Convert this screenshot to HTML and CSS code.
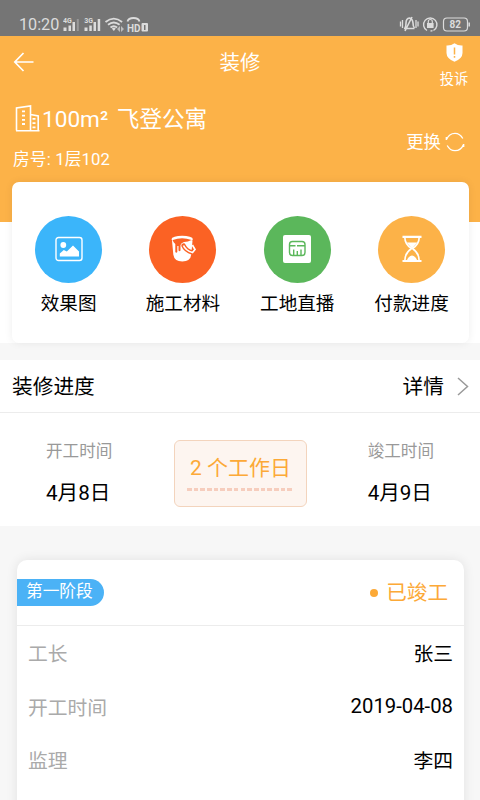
FILE: index.html
```html
<!DOCTYPE html>
<html lang="zh-CN">
<head>
<meta charset="utf-8">
<title>装修</title>
<link rel="stylesheet" href="styles.css">
</head>
<body>
<div class="status">
  <span class="clock">10:20</span>
  <svg class="signals" width="88" height="18" viewBox="0 0 88 18" fill="#dcdcdc">
    <text class="net" x="0" y="7">4G</text>
    <path d="M0.500 11.500H3.500v3.500H.500zM5.500 9.500H8v5.500H5.500zM9.500 6H12v9H9.500z"/><path d="M13.800 3h2v12h-2z" opacity=".35"/>
    <text class="net" x="21.200" y="7">3G</text>
    <path d="M21.500 11.500h3v3.500h-3zM26.300 9.500h2.500v5.500h-2.500zM30.500 6H33v9h-2.500zM34.700 3h2.500v12h-2.500z"/>
    <g fill="none" stroke="#dcdcdc" stroke-width="1.800"><path d="M42.500 6q8.300-6.800 16.600 0M45 8.800q5.800-4.600 11.600 0M47.500 11.500q3.300-2.600 6.600 0"/><path d="M64.500 5.500q1-3.500 6-3.500t6 3.500"/></g>
    <path d="M48.800 12.500q2-1.400 4 0l-2 2.500z"/><path d="M54 13l3-3v6zM58 10l3 3-3 3z" opacity=".7"/>
    <text class="hd" x="64" y="15.500" textLength="13.500" lengthAdjust="spacingAndGlyphs">HD</text>
    <rect x="78.500" y="7" width="6.500" height="8.500" rx="1"/><path d="M81 9h1.500v5H81z" fill="#757575"/>
  </svg>
  <svg class="phone-state" width="72" height="18" viewBox="0 0 72 18" fill="none" stroke="#dcdcdc">
    <path d="M1.500 6.500v5M3.500 5v8M17 5v8M19 6.500v5" stroke-width="1.300"/>
    <path d="M5 13.500h10.500M6 13q1-1.500 1-5 0-4.500 3.500-5 3 .5 3.500 5 0 3.500 1.500 5M6 16l7-14" stroke-width="1.600"/>
    <path d="M28 15.500a6.700 6.700 0 1 1 6.500 0M33.500 15.600l-2 .6" stroke-width="1.400"/>
    <rect x="28" y="8" width="6.600" height="5" fill="#dcdcdc" stroke="none"/><path d="M29.300 8V6.500a2 2 0 0 1 4 0V8" stroke-width="1.200"/>
    <rect x="44.500" y="3" width="24" height="13" rx="3.500" stroke-width="1.200"/><path d="M70.200 7.500v4" stroke-width="1.500"/>
    <text class="battery" x="50.500" y="13.200">82</text>
  </svg>
</div>
<header class="hero">
  <div class="bar">
    <svg class="back" width="22" height="20" viewBox="0 0 22 20" fill="none" stroke="#fff" stroke-width="1.700"><path d="M20.500 10H2M10.500 1L1.800 10l8.700 9"/></svg>
    <h1>装修</h1>
    <div class="complain">
      <svg width="17" height="19" viewBox="0 0 17 19"><path d="M8.500 0.300Q12 2.800 16.500 2.500V10q0 5.500-8 8.800Q.5 15.500.5 10V2.500Q5 2.800 8.500.300z" fill="#fff"/><path d="M8.500 4.500v7M8.500 13v1.800" stroke="#fcb248" stroke-width="1.500"/></svg>
      <span>投诉</span>
    </div>
  </div>
  <div class="site">
    <div class="place">
      <div class="name"><svg width="25" height="27" viewBox="0 0 25 27" fill="none" stroke="#fff" stroke-width="1.600"><path d="M1 25.800h23.500M1.500 25.500V3L15.500.9v24.600M15.500 9.500l7.700 1.500v14.500"/><path d="M8.500 5.500v15M19 13v11" stroke-width="3" stroke-dasharray="1.800 2.400"/></svg><span>100m² 飞登公寓</span></div>
      <div class="room">房号: 1层102</div>
    </div>
    <div class="switch"><span>更换</span><svg width="20" height="20" viewBox="0 0 20 20" fill="none" stroke="#fff" stroke-width="1.300"><path d="M1.500 7.500Q4 1.300 10 1.300q5 0 7.800 5.200M18.500 12.500Q16 18.700 10 18.700q-5 0-7.800-5.200M1.300 5v3M18.700 12v3"/></svg></div>
  </div>
</header>
<section class="menu-area">
  <nav class="menu">
    <div class="item"><div class="disc blue"><svg width="28" height="26" viewBox="0 0 28 26"><rect x="1" y="1.500" width="26" height="23" rx="2.500" fill="none" stroke="#fff" stroke-width="1.400"/><circle cx="8.300" cy="9" r="2.900" fill="#fff"/><path d="M4.800 20.500v-3l4-3.500 3 1.500L18 9.500l6 6v5z" fill="#fff"/></svg></div><span>效果图</span></div>
    <div class="item"><div class="disc red"><svg width="28" height="28" viewBox="0 0 28 28"><path d="M3 5.500l1.300 14q1 7 9 7t9-7L23.500 5.500z" fill="#fff"/><ellipse cx="13.200" cy="4.200" rx="10.700" ry="3.400" fill="#fff"/><path d="M3.800 5Q13 1.500 22.500 5q-3.500 1.800-7.500 2-3 1-3.500 3v5.500q-1 1.500-2 0V11H8.300v6q-1 1.500-2 0V9Q4 7.500 3.800 5z" fill="#fb6224"/><path d="M14.500 10.500q2 5 9 7" fill="none" stroke="#fb6224" stroke-width="4.500" stroke-linecap="round"/><path d="M14.500 10.500q2 5 9 7l2.500-3-2.600-4.500" fill="none" stroke="#fff" stroke-width="1.700"/></svg></div><span>施工材料</span></div>
    <div class="item"><div class="disc green"><svg width="28" height="28" viewBox="0 0 28 28"><rect width="28" height="28" rx="2" fill="#fff"/><g fill="none" stroke="#5bb75b" stroke-width="1.400"><rect x="6.500" y="6.500" width="15.500" height="14" rx="3"/><path d="M7 10.700h5.500M14 10.700h8M10.700 14.500V20M14.300 16v4M18 14.500V20"/></g></svg></div><span>工地直播</span></div>
    <div class="item"><div class="disc amber"><svg width="20" height="28" viewBox="0 0 20 28" fill="none" stroke="#fff"><path d="M.5 1.800h19M.5 26h19" stroke-width="2.200"/><path d="M2.800 2q0 7.500 6.700 11.500Q2.800 18 2.800 26M17.200 2q0 7.500-6.700 11.500 6.700 4.500 6.700 12.500" stroke-width="1.600"/><path d="M4.500 7.500h11l-5.500 6zM5 25q1.500-4 5-4.500 3.500.5 5 4.500z" fill="#fff" stroke="none"/></svg></div><span>付款进度</span></div>
  </nav>
</section>
<section class="progress">
  <div class="heading"><h2>装修进度</h2><span class="detail">详情</span><svg width="12" height="19" viewBox="0 0 12 19" fill="none" stroke="#999" stroke-width="1.500"><path d="M1 1l9.500 8.500L1 18"/></svg></div>
  <div class="dates">
    <div class="date"><span class="label">开工时间</span><span class="value">4月8日</span></div>
    <div class="days"><span>2 个工作日</span><i></i></div>
    <div class="date"><span class="label">竣工时间</span><span class="value">4月9日</span></div>
  </div>
</section>
<main class="stages">
  <article class="stage">
    <div class="stage-head"><span class="tag">第一阶段</span><span class="done">已竣工</span></div>
    <div class="row"><span>工长</span><b>张三</b></div>
    <div class="row"><span>开工时间</span><b class="num">2019-04-08</b></div>
    <div class="row"><span>监理</span><b>李四</b></div>
  </article>
</main>
</body>
</html>
```

FILE: styles.css
```css
* { box-sizing: border-box; }
body {
  margin: 0;
  height: 800px;
  overflow: hidden;
  display: flex;
  flex-direction: column;
  background: #f7f7f7;
  color: #000;
  font-family: Roboto, "Noto Sans CJK SC", sans-serif;
}
svg { display: block; flex: none; }
h1, h2 { margin: 0; font-weight: 400; }
.status {
  flex: none;
  height: 36px;
  padding: 15px 19px 0;
  display: flex;
  background: #757575;
  color: #dcdcdc;
}
.clock { width: 44px; font-size: 16.2px; line-height: 20px; }
.signals { margin-top: 1px; }
.net { font-size: 7px; font-weight: 700; }
.hd { font-size: 11.5px; font-weight: 700; }
.battery { font-size: 10px; font-weight: 700; fill: #dcdcdc; stroke: none; }
.phone-state { margin-left: auto; margin-right: -10px; }

.hero { flex: none; height: 186px; background: #fcb248; color: #fff; }
.bar { height: 52px; display: grid; grid-template-columns: 60px 1fr 60px; }
.back { margin: 16px 0 0 13px; }
h1 { font-size: 20.5px; line-height: 54px; text-align: center; }
.complain { display: flex; flex-direction: column; align-items: center; padding: 7px 0 0 8px; }
.complain span { font-size: 14.3px; line-height: 20px; margin-top: 7px; }
.site { display: flex; justify-content: space-between; padding: 0 15px; }
.name { display: flex; align-items: center; height: 30px; margin-top: 15px; font-size: 22.6px; line-height: 30px; word-spacing: 3px; }
.name span { padding-top: 3px; }
.name svg { margin-right: 2px; }
.room { margin: 15px 0 0 -2px; font-size: 16.7px; line-height: 24px; letter-spacing: .15px; }
.switch { display: flex; align-items: center; height: 28px; margin-top: 40px; font-size: 17.4px; line-height: 28px; }
.switch span { margin-right: 4px; }

.menu-area { flex: none; height: 121px; padding: 0 11px 0 11.5px; background: #fff; }
.menu {
  position: relative;
  height: 161px;
  margin-top: -40px;
  padding-top: 33.5px;
  display: grid;
  grid-template-columns: repeat(4, 114.300px);
  border-radius: 7px;
  background: #fff;
  box-shadow: 0 0 8px rgba(0, 0, 0, .07);
}
.item { display: flex; flex-direction: column; align-items: center; font-size: 18.6px; line-height: 28px; }
.disc { width: 67px; height: 67px; margin-bottom: 7.5px; border-radius: 50%; display: grid; place-items: center; }
.blue { background: #3bb5fa; }
.red { background: #fb6224; }
.green { background: #5bb75b; }
.amber { background: #fcb248; }

.progress { flex: none; height: 166px; margin-top: 17px; background: #fff; }
.heading { height: 53px; padding: 0 11px 0 12px; display: flex; align-items: center; border-bottom: 1px solid #ececec; }
.heading h2, .detail { font-size: 20.7px; line-height: 52px; padding-top: 1px; }
.detail { margin-left: auto; margin-right: 13px; }
.dates { height: 113px; padding: 0 46px; display: flex; justify-content: space-between; }
.date { display: flex; flex-direction: column; padding-top: 27px; }
.label { font-size: 16.6px; line-height: 24px; color: #999; }
.value { font-size: 20.6px; line-height: 30px; margin-top: 14px; }
.days {
  width: 133px;
  height: 67px;
  margin: 27px -1px 0 0;
  padding: 11px 12px;
  border: 1px solid #f3d4bd;
  border-radius: 6px;
  background: #fdf5f0;
  color: #fca937;
  font-size: 21px;
  line-height: 32px;
  white-space: nowrap;
}
.days span { display: block; text-align: center; }
.days i { display: block; height: 3px; margin: 4px 0 0; background: repeating-linear-gradient(90deg, #f6cdbd 0 4.600px, transparent 4.600px 6.700px); }

.stages { flex: none; padding: 34px 16px 0 17px; }
.stage { height: 260px; border-radius: 10px 10px 0 0; background: #fff; box-shadow: 0 0 12px rgba(0, 0, 0, .09); }
.stage-head { height: 66px; padding-right: 16px; display: flex; align-items: center; justify-content: space-between; border-bottom: 1px solid #ececec; }
.tag { width: 87px; height: 27px; padding-left: 9px; border-radius: 0 14px 14px 0; background: #4bb2f6; color: #fff; font-size: 16.7px; line-height: 26px; }
.done { display: flex; align-items: center; gap: 8px; color: #fca937; font-size: 20.6px; line-height: 32px; }
.done::before { content: ""; width: 8px; height: 8px; border-radius: 50%; background: #fca937; }
.row { height: 53.500px; padding: 0 11px; display: flex; align-items: center; justify-content: space-between; font-size: 19.800px; }
.row span { color: #aaa; }
.row b { font-weight: 400; }
.row .num { font-size: 20.3px; }
```
